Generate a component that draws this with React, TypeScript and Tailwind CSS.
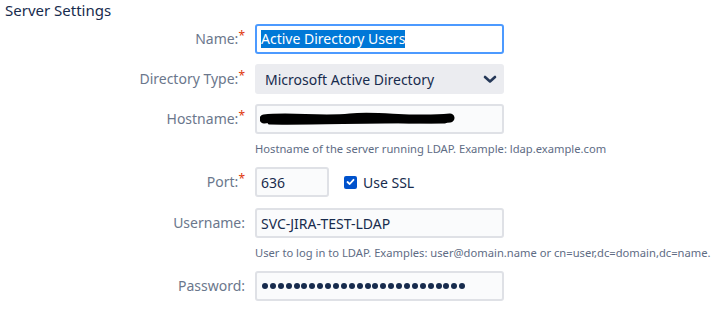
const font = { fontFamily: '"Noto Sans", "Open Sans", sans-serif' };

function Label({ text, required }: { text: string; required?: boolean }) {
  return (
    <div className="w-[255px] shrink-0 text-right text-[14px] text-[#6b778c] pr-[10px] leading-[30px]">
      {text}
      {required ? <span className="text-[#de350b] align-top text-[12px] leading-[24px]">*</span> : null}
    </div>
  );
}

function Help({ children }: { children: React.ReactNode }) {
  return (
    <div className="pl-[255px] mt-[8px] mb-[11px] text-[11.2px] leading-[14px] text-[#5e6c84] whitespace-nowrap">{children}</div>
  );
}

export default function App() {
  return (
    <div className="w-[712px] h-[319px] bg-white overflow-hidden text-[#172b4d]" style={font}>
      <h2 className="pl-[5px] pt-0 text-[15px] leading-[20px] text-[#172b4d]">Server Settings</h2>

      <div className="flex items-center mt-[4px]">
        <Label text="Name:" required />
        <div className="w-[249px] h-[30px] rounded-[3px] border-2 border-[#4c9aff] bg-white flex items-center px-[4px]">
          <span className="bg-[#0078d7] text-white text-[14px] leading-[18px]">Active Directory Users</span>
        </div>
      </div>

      <div className="flex items-center mt-[10px]">
        <Label text="Directory Type:" required />
        <div className="w-[249px] h-[30px] rounded-[3px] bg-[#ebecf0] flex items-center justify-between pl-[10px] pr-[7px] text-[14px]">
          <span>Microsoft Active Directory</span>
          <svg width="14" height="9" viewBox="0 0 14 9">
            <path d="M2 2 L7 6.5 L12 2" fill="none" stroke="#253858" strokeWidth="2.6" strokeLinecap="round" strokeLinejoin="round" />
          </svg>
        </div>
      </div>

      <div className="flex items-center mt-[10px]">
        <Label text="Hostname:" required />
        <div className="w-[249px] h-[30px] rounded-[3px] border-2 border-[#dfe1e6] bg-[#fafbfc] flex items-center px-[3px]">
          <svg width="195" height="18" viewBox="0 0 195 18">
            <path d="M4 9 C30 6, 60 11, 90 8 C120 5, 150 12, 190 8" fill="none" stroke="#000" strokeWidth="9" strokeLinecap="round" />
            <path d="M10 12 C50 13, 120 10, 185 11" fill="none" stroke="#000" strokeWidth="5" strokeLinecap="round" />
          </svg>
        </div>
      </div>
      <Help>Hostname of the server running LDAP. Example: ldap.example.com</Help>

      <div className="flex items-center">
        <Label text="Port:" required />
        <div className="w-[74px] h-[30px] rounded-[3px] border-2 border-[#dfe1e6] bg-[#fafbfc] flex items-center px-[4px] text-[14px]">636</div>
        <div className="ml-[15px] flex items-center gap-[6px] text-[14px]">
          <span className="w-[13px] h-[13px] rounded-[2px] bg-[#0052cc] flex items-center justify-center">
            <svg width="9" height="8" viewBox="0 0 9 8">
              <path d="M1.5 4 L3.7 6 L7.5 1.8" fill="none" stroke="#fff" strokeWidth="1.8" strokeLinecap="round" strokeLinejoin="round" />
            </svg>
          </span>
          <span>Use SSL</span>
        </div>
      </div>

      <div className="flex items-center mt-[11px]">
        <Label text="Username:" />
        <div className="w-[249px] h-[30px] rounded-[3px] border-2 border-[#dfe1e6] bg-[#fafbfc] flex items-center px-[4px] text-[14px]">SVC-JIRA-TEST-LDAP</div>
      </div>
      <Help>User to log in to LDAP. Examples: user@domain.name or cn=user,dc=domain,dc=name.</Help>

      <div className="flex items-center">
        <Label text="Password:" />
        <div className="w-[249px] h-[30px] rounded-[3px] border-2 border-[#dfe1e6] bg-[#fafbfc] flex items-center gap-[1.9px] px-[5px]">
          {Array.from({ length: 26 }).map((_, i) => (
            <span key={i} className="w-[6px] h-[6px] rounded-full bg-[#172b4d]" />
          ))}
        </div>
      </div>
    </div>
  );
}
